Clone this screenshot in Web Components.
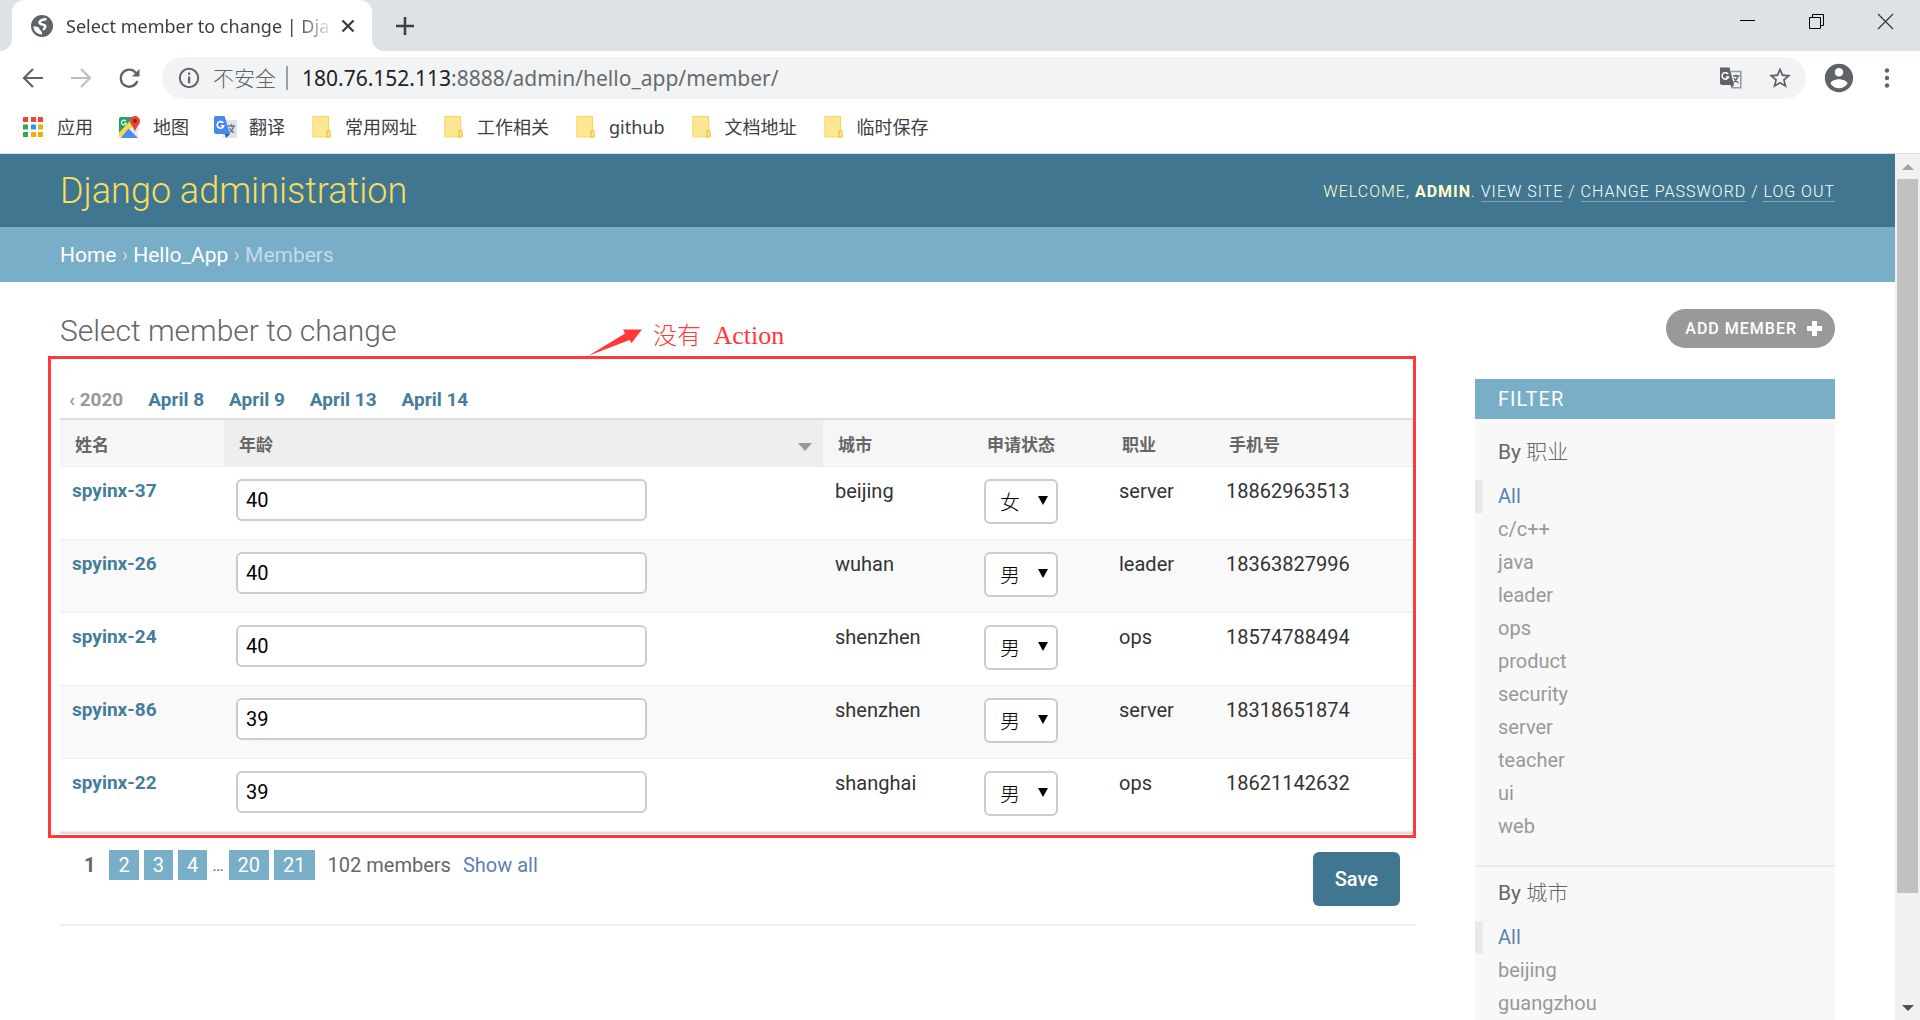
<!DOCTYPE html>
<html lang="zh-CN">
<head>
<meta charset="utf-8">
<title>Select member to change | Django site admin</title>
<style>
  html, body { margin: 0; height: 100%; }
  body { font-family: Roboto, "Noto Sans CJK SC", sans-serif; font-size: 20px; line-height: 24px; color: #333; background: #fff; overflow: hidden; }
</style>
</head>
<body>
<browser-window></browser-window>

<script>
class BaseElement extends HTMLElement {
  constructor() {
    super();
    this.attachShadow({ mode: 'open' });
  }
  connectedCallback() {
    this.shadowRoot.innerHTML = '<style>*{box-sizing:border-box}a{color:inherit;text-decoration:none}button{font:inherit;border:0;background:none;padding:0;color:inherit}svg{display:block;flex:none}' + this.styles() + '</style>' + this.markup();
  }
  styles() { return ''; }
  markup() { return '<slot></slot>'; }
}

const UI_FONT = '"Noto Sans","Noto Sans CJK SC",sans-serif';

class TabStrip extends BaseElement {
  styles() { return `
    :host{display:flex;height:51px;background:#dee1e6;padding-left:12px;font-family:${UI_FONT};color:#3c4043}
    .tab{position:relative;display:flex;align-items:center;width:360px;padding:0 16px 0 18px;background:#fff;border-radius:12px 12px 0 0;font-size:18px}
    .tab::before,.tab::after{content:"";position:absolute;bottom:0;width:12px;height:12px}
    .tab::before{right:100%;background:radial-gradient(circle at 0 0,transparent 12px,#fff 12px)}
    .tab::after{left:100%;background:radial-gradient(circle at 100% 0,transparent 12px,#fff 12px)}
    .title{flex:1;margin:0 6px 0 12px;overflow:hidden;white-space:nowrap;-webkit-mask-image:linear-gradient(90deg,#000 86%,transparent);mask-image:linear-gradient(90deg,#000 86%,transparent)}
    .new{display:grid;place-items:center;margin-left:21px;width:24px}
    .win{display:flex;margin-left:auto}
    .win button{display:grid;justify-items:center;align-content:start;padding-top:13px;width:69px;color:#000}`; }
  markup() { return `
    <div class="tab">
      <svg width="24" height="24" viewBox="0 0 24 24"><circle cx="12" cy="12" r="11" fill="#5f6368"/><path d="M16.500 5.200C12 5.200 9 7 9.800 9.200c.8 1.800 4.700.8 5.400 2.800.5 1.500-1.700 2.300-1.200 4.200" fill="none" stroke="#fff" stroke-width="2.600"/><path d="M3.400 12.300C6 12.300 9 13 9.500 14.800c.5 1.900 3 1.900 2.500 5.600C7 20.400 3.400 17 3.400 12.300z" fill="#fff"/></svg>
      <span class="title">Select member to change | Dja</span>
      <button aria-label="Close tab"><svg width="16" height="16" viewBox="0 0 16 16"><path d="M2.500 2.500l11 11M13.500 2.500l-11 11" stroke="#3c4043" stroke-width="2.400"/></svg></button>
    </div>
    <button class="new" aria-label="New tab"><svg width="18" height="18" viewBox="0 0 18 18"><path d="M9 0v18M0 9h18" stroke="#3c4043" stroke-width="2.600"/></svg></button>
    <div class="win">
      <button aria-label="Minimize"><svg width="17" height="17" viewBox="0 0 17 17"><path d="M1 7.500h15" stroke="#000"/></svg></button>
      <button aria-label="Restore"><svg width="17" height="17" viewBox="0 0 17 17" fill="none" stroke="#000"><path d="M1.500 4.500h11v11h-11zM4.500 4.500v-3h11v11h-3"/></svg></button>
      <button aria-label="Close"><svg width="17" height="17" viewBox="0 0 17 17"><path d="M1 1l15 15M16 1L1 16" stroke="#333" stroke-width="1.200"/></svg></button>
    </div>`; }
}

class AddressBar extends BaseElement {
  styles() { return `
    :host{display:flex;align-items:center;height:54px;padding:0 21px;font-family:${UI_FONT};font-size:21px;color:#5f6368}
    button{display:grid;place-items:center;width:24px;margin-right:24px}
    .pill{flex:1;display:flex;align-items:center;height:42px;margin:0 16px 0 -3px;padding:0 15px;border-radius:21px;background:#f1f3f4}
    .pill button:last-child{margin-right:0}
    .warn{padding:0 10px 0 12px;font-weight:300}
    .bar{width:2px;height:24px;background:#9aa0a6;margin-right:14px}
    .url{flex:1;color:#686b6e}
    .url b{font-weight:400;color:#202124}
    .avatar{width:34px;margin-right:19px}
    .menu{margin-right:0}`; }
  markup() { return `
    <button aria-label="Back"><svg width="24" height="24" viewBox="0 0 24 24" fill="none" stroke="#5f6368" stroke-width="2.200"><path d="M22 12H3.500M12 3l-9 9 9 9"/></svg></button>
    <button aria-label="Forward"><svg width="24" height="24" viewBox="0 0 24 24" fill="none" stroke="#bcbec1" stroke-width="2.200"><path d="M2 12h18.500M12 3l9 9-9 9"/></svg></button>
    <button aria-label="Reload"><svg width="24" height="24" viewBox="0 0 24 24"><path d="M19 7A8.500 8.500 0 1 0 20.300 15" fill="none" stroke="#5f6368" stroke-width="2.300"/><path d="M22.500 3v7.500H15z" fill="#5f6368"/></svg></button>
    <div class="pill">
      <svg width="24" height="24" viewBox="0 0 24 24"><circle cx="12" cy="12" r="9.200" fill="none" stroke="#5f6368" stroke-width="2"/><path d="M11 6.500h2.200v2.300H11zM11 10.600h2.200v6.600H11z" fill="#5f6368"/></svg>
      <span class="warn">不安全</span><span class="bar"></span>
      <span class="url"><b>180.76.152.113</b>:8888/admin/hello_app/member/</span>
      <button aria-label="Translate"><svg width="24" height="24" viewBox="0 0 24 24"><path d="M12 5.500h9.800v16.200H12.500" fill="none" stroke="#9a9da0" stroke-width="1.600"/><path d="M1 1.500h9.500L15 19H2.500L1 17.500z" fill="#5f6368"/><path d="M11.500 19H15l-2.500 3z" fill="#5f6368"/><path d="M9.200 8.200A3.300 3.300 0 1 0 9.500 11H6.800" fill="none" stroke="#fff" stroke-width="1.500"/><path d="M14 10h6.500M17 8.500V10M19 10c-.7 3-2.500 5-4.500 6.500M15 12c1 2 2.500 3.500 4.500 5" fill="none" stroke="#5f6368" stroke-width="1.300"/></svg></button>
      <button aria-label="Bookmark"><svg width="26" height="26" viewBox="0 0 24 24"><path fill="#5f6368" d="M22 9.240l-7.190-.620L12 2 9.190 8.630 2 9.240l5.460 4.730L5.820 21 12 17.270 18.180 21l-1.630-7.030L22 9.240zM12 15.400l-3.760 2.270 1-4.280-3.320-2.880 4.380-.380L12 6.100l1.710 4.040 4.380.380-3.320 2.880 1 4.280L12 15.400z"/></svg></button>
    </div>
    <button class="avatar" aria-label="Profile"><svg width="34" height="34" viewBox="0 0 24 24"><path fill="#5f6368" d="M12 2C6.480 2 2 6.480 2 12s4.480 10 10 10 10-4.480 10-10S17.520 2 12 2zm0 3c1.660 0 3 1.340 3 3s-1.340 3-3 3-3-1.340-3-3 1.340-3 3-3zm0 14.200c-2.500 0-4.710-1.280-6-3.220.030-1.990 4-3.080 6-3.080 1.990 0 5.970 1.090 6 3.080-1.290 1.940-3.500 3.220-6 3.220z"/></svg></button>
    <button class="menu" aria-label="Menu"><svg width="24" height="24" viewBox="0 0 24 24" fill="#5f6368"><circle cx="12" cy="4.500" r="2.200"/><circle cx="12" cy="12" r="2.200"/><circle cx="12" cy="19.500" r="2.200"/></svg></button>`; }
}

const BOOKMARK_ICONS = {
  apps: '<path fill="#f44336" d="M2 2h5v5H2zM10 2h5v5h-5zM17 2h5v5h-5z"/><path fill="#34a853" d="M2 9.500h5v5H2zM2 17h5v5H2z"/><path fill="#2196f3" d="M10 9.500h5v5h-5z"/><path fill="#fbab00" d="M17 9.500h5v5h-5zM10 17h5v5h-5zM17 17h5v5h-5z"/>',
  maps: '<rect x="2" y="2" width="19" height="21" rx="2" fill="#e8eaed"/><path d="M4 2h13L2 18V4a2 2 0 0 1 2-2z" fill="#22a45d"/><path d="M2 18L17 2l4 4L4 23a2 2 0 0 1-2-2z" fill="#fdd74b"/><path d="M11.500 13.500L21 23H4z" fill="#4a8cf7"/><path d="M8.800 6A2.400 2.400 0 1 0 9.300 8H7.200" fill="none" stroke="#fff" stroke-width="1.200"/><path d="M18 1a5 5 0 0 1 5 5c0 4-3.800 5.500-5 11-1.200-5.500-5-7-5-11a5 5 0 0 1 5-5z" fill="#e8453c"/><circle cx="18" cy="6" r="1.900" fill="#8c1d18"/>',
  translate: '<rect x="10" y="5" width="14" height="18" rx="1.500" fill="#dfe2e6"/><path d="M15 11h7M18.500 9v2M21 11c-.6 3-2.500 5-4.500 6.500M16.500 13c1 2 2.500 3.500 4.500 5" fill="none" stroke="#607d8b" stroke-width="1.400"/><path d="M2 1h9.500L17 19H3a2 2 0 0 1-2-2V2.500z" fill="#4688f1"/><path d="M12 19h5l-4 4z" fill="#2f55b5"/><path d="M10.200 8A3.300 3.300 0 1 0 10.700 10.700H8" fill="none" stroke="#fff" stroke-width="1.600"/>',
  folder: '<path d="M4 1.500h15.500V22H4z" fill="#ffe694" stroke="#f7d75c" stroke-width="1.200"/><path d="M18 22v-5.500q0-1 1-1h1q1 0 1 1V22z" fill="#ffe694" stroke="#ebc22f" stroke-width="1.200"/>'
};

class BookmarkItem extends BaseElement {
  styles() { return `
    :host{display:block}
    a{display:flex;align-items:center;gap:12px}`; }
  markup() { return `<a href="#"><svg width="24" height="24" viewBox="0 0 24 24">${BOOKMARK_ICONS[this.getAttribute('icon')]}</svg><slot></slot></a>`; }
}

class BookmarkBar extends BaseElement {
  styles() { return `:host{display:flex;align-items:center;gap:24px;height:49px;padding:0 21px 5px;border-bottom:1px solid #dcdee1;font-family:${UI_FONT};font-size:18px;color:#3c4043}`; }
  markup() { return `
    <bookmark-item icon="apps">应用</bookmark-item>
    <bookmark-item icon="maps">地图</bookmark-item>
    <bookmark-item icon="translate">翻译</bookmark-item>
    <bookmark-item icon="folder">常用网址</bookmark-item>
    <bookmark-item icon="folder">工作相关</bookmark-item>
    <bookmark-item icon="folder">github</bookmark-item>
    <bookmark-item icon="folder">文档地址</bookmark-item>
    <bookmark-item icon="folder">临时保存</bookmark-item>`; }
}

class AdminHeader extends BaseElement {
  styles() { return `
    :host{display:flex;align-items:center;justify-content:space-between;height:73px;padding:0 60px;background:#417690;color:#ffc}
    h1{margin:0;font-size:36px;font-weight:300;color:#f5dd5d}
    .tools{padding-top:2px;font-size:16px;letter-spacing:1px;font-weight:300;text-transform:uppercase}
    .tools b{font-weight:700}
    .tools a{color:#fff;border-bottom:1px solid rgba(255,255,255,.35)}`; }
  markup() { return `
    <h1><a href="#">Django administration</a></h1>
    <div class="tools">Welcome, <b>admin</b>. <a href="#">View site</a> / <a href="#">Change password</a> / <a href="#">Log out</a></div>`; }
}

class AdminBreadcrumbs extends BaseElement {
  styles() { return `
    :host{display:block;padding:2px 60px 0;line-height:53px;font-size:21px;background:#79aec8;color:#c4dce8}
    a{color:#fff}`; }
  markup() { return `<nav aria-label="Breadcrumbs"><a href="#">Home</a> › <a href="#">Hello_App</a> › Members</nav>`; }
}

const MEMBERS = [
  ['spyinx-37', 40, 'beijing', '女', 'server', '18862963513'],
  ['spyinx-26', 40, 'wuhan', '男', 'leader', '18363827996'],
  ['spyinx-24', 40, 'shenzhen', '男', 'ops', '18574788494'],
  ['spyinx-86', 39, 'shenzhen', '男', 'server', '18318651874'],
  ['spyinx-22', 39, 'shanghai', '男', 'ops', '18621142632']
];

class ChoiceSelect extends BaseElement {
  styles() { return `
    :host{display:inline-grid;vertical-align:top;align-items:center}
    select,svg{grid-area:1/1}
    select{appearance:none;width:74px;height:45px;padding:4px 0 0 14px;border:2px solid #ccc;border-radius:6px;background:#fff;color:#000;font:inherit;font-weight:300}
    svg{justify-self:end;margin:0 10px 2px 0;pointer-events:none}`; }
  markup() {
    const v = this.getAttribute('value');
    return `<select aria-label="${this.getAttribute('label')}">${['男', '女'].map(o => `<option${o === v ? ' selected' : ''}>${o}</option>`).join('')}</select><svg width="10" height="9" viewBox="0 0 10 9"><path d="M0 0h10L5 9z" fill="#000"/></svg>`;
  }
}

class MemberTable extends BaseElement {
  styles() { return `
    :host{display:block;border:solid #ddd;border-width:2px 0}
    table{width:100%;border-collapse:collapse;table-layout:fixed}
    th,td{text-align:left;vertical-align:top;border-bottom:1px solid #eee}
    thead th{height:46px;padding:4px 15px 0;vertical-align:middle;background:#f6f6f6;color:#666;font-size:17px}
    thead th.sorted{background:#eee}
    .sorted a{display:flex;align-items:center;justify-content:space-between;margin-right:-4px}
    .sorted svg{margin-top:4px}
    tbody th,td{height:73px;padding:12px 12px 0}
    tbody tr:nth-child(even){background:#f9f9f9}
    tbody th{color:#447e9b;font-size:19px;font-weight:700}
    input{display:block;width:411px;max-width:100%;height:42px;padding:0 8px;border:2px solid #ccc;border-radius:6px;font:inherit;color:#000;background:#fff}`; }
  markup() { return `
    <table>
      <colgroup><col style="width:164px"><col><col style="width:149px"><col style="width:135px"><col style="width:107px"><col style="width:201px"></colgroup>
      <thead><tr>
        <th scope="col"><a href="#">姓名</a></th>
        <th scope="col" class="sorted"><a href="#">年龄<svg width="14" height="8" viewBox="0 0 14 8"><path d="M0 0h14L7 8z" fill="#999"/></svg></a></th>
        <th scope="col"><a href="#">城市</a></th><th scope="col"><a href="#">申请状态</a></th><th scope="col"><a href="#">职业</a></th><th scope="col"><a href="#">手机号</a></th>
      </tr></thead>
      <tbody>${MEMBERS.map(([name, age, city, sex, job, phone]) => `<tr>
        <th scope="row"><a href="#">${name}</a></th>
        <td><input type="text" value="${age}" aria-label="${name} 年龄"></td>
        <td>${city}</td><td><choice-select value="${sex}" label="${name} 申请状态"></choice-select></td><td>${job}</td><td>${phone}</td></tr>`).join('')}
      </tbody>
    </table>`; }
}

class DateHierarchy extends BaseElement {
  styles() { return `
    :host{display:block}
    nav{display:flex;gap:25px;padding:2px 0 0 9px;line-height:37px;font-size:19px;font-weight:700;color:#447e9b}
    .back{color:#999}`; }
  markup() { return `<nav aria-label="Dates"><a class="back" href="#">‹ 2020</a><a href="#">April 8</a><a href="#">April 9</a><a href="#">April 13</a><a href="#">April 14</a></nav>`; }
}

class ListPaginator extends BaseElement {
  styles() { return `
    :host{display:flex;align-items:flex-start;justify-content:space-between;padding:16px 15px 18px 0;border-bottom:2px solid #eee;color:#666}
    .pages{display:flex;gap:5px;line-height:30px}
    .pages a{padding:0 9px;background:#79aec8;color:#fff}
    .this{padding:0 9px 0 24px}
    .gap{font-size:17px}
    .count{padding:0 7px 0 8px}
    .pages .all{background:none;color:#5b80b2;padding:0}
    button{margin-top:2px;height:54px;padding:0 22px;border-radius:6px;background:#417690;color:#fff;font-weight:500}`; }
  markup() { return `
    <div class="pages"><b class="this">1</b><a href="#">2</a><a href="#">3</a><a href="#">4</a><span class="gap">…</span><a href="#">20</a><a href="#">21</a><span class="count">102 members</span><a class="all" href="#">Show all</a></div>
    <button type="submit">Save</button>`; }
}

class FilterGroup extends BaseElement {
  styles() { return `
    :host{display:block;padding:14px 0 22px;border-bottom:2px solid #eaeaea}
    h3{margin:0;padding:0 23px 16px;font-size:21px;font-weight:400;color:#666}
    h3 span{font-weight:300}
    ul{margin:0;padding:0;list-style:none;color:#999}
    li{padding-left:23px;line-height:33px}
    li:first-child{padding-left:15px;border-left:8px solid #eaeaea;color:#5b80b2}`; }
  markup() { return `<h3>By <span>${this.getAttribute('name')}</span></h3><ul>${this.getAttribute('choices').split(' ').map(c => `<li><a href="#">${c}</a></li>`).join('')}</ul>`; }
}

class FilterPanel extends BaseElement {
  styles() { return `
    :host{display:block;flex:none;width:360px;background:#f8f8f8}
    h2{margin:0 0 7px;padding-left:23px;line-height:40px;font-size:20px;font-weight:400;letter-spacing:1px;background:#79aec8;color:#fff;text-transform:uppercase}`; }
  markup() { return `<h2>Filter</h2>
    <filter-group name="职业" choices="All c/c++ java leader ops product security server teacher ui web"></filter-group>
    <filter-group name="城市" choices="All beijing guangzhou"></filter-group>`; }
}

class CalloutNote extends BaseElement {
  styles() { return `
    :host{position:absolute;inset:-23px -1px -4px -12px;border:3px solid #ff3838;pointer-events:none;color:#ff3838}
    .note{position:absolute;left:537px;bottom:100%;display:flex;align-items:center;gap:11px;margin-bottom:1px}
    p{margin:0;padding-bottom:10px;font:26px/24px "Liberation Serif","Noto Sans CJK SC",serif;white-space:nowrap}
    span{margin-right:6px;font-size:24px;font-weight:300}`; }
  markup() { return `<div class="note"><svg width="54" height="30" viewBox="0 0 54 30"><path d="M0 30L37 7.500 35 3.500 54 3.500 43.500 17 41.500 14z" fill="#ff3838"/></svg><p><span>没有</span> Action</p></div>`; }
}

class ChangeList extends BaseElement {
  styles() { return `
    :host{display:block;padding:26px 60px 0}
    .head{display:flex;align-items:center;justify-content:space-between;height:40px;margin-bottom:31px}
    h1{margin:0;padding-top:5px;font-size:30px;font-weight:300;color:#666;line-height:40px}
    .add{display:flex;align-items:center;gap:10px;height:39px;padding:1px 13px 0 19px;border-radius:20px;background:#999;color:#fff;font-size:16px;font-weight:500;letter-spacing:1px;text-transform:uppercase}
    .cols{display:flex;align-items:flex-start;gap:60px}
    form{flex:1;min-width:0}
    .list{position:relative}`; }
  markup() { return `
    <div class="head"><h1>Select member to change</h1><a class="add" href="#">Add member<svg width="15" height="15" viewBox="0 0 15 15"><path d="M7.500 0v15M0 7.500h15" stroke="#fff" stroke-width="5"/></svg></a></div>
    <div class="cols">
      <form><div class="list"><date-hierarchy></date-hierarchy><member-table></member-table><callout-note></callout-note></div><list-paginator></list-paginator></form>
      <filter-panel></filter-panel>
    </div>`; }
}

class PageScrollbar extends BaseElement {
  styles() { return `
    :host{display:flex;flex-direction:column;align-items:center;flex:none;width:25px;padding:10px 0 9px;background:#f1f1f1}
    .track{flex:1;width:21px;margin:9px 0 15px}
    .thumb{height:88%;background:#c1c1c1}`; }
  markup() { return `<svg width="12" height="6" viewBox="0 0 12 6"><path d="M0 6h12L6 0z" fill="#a3a3a3"/></svg><div class="track"><div class="thumb"></div></div><svg width="12" height="6" viewBox="0 0 12 6"><path d="M0 0h12L6 6z" fill="#505050"/></svg>`; }
}

class BrowserWindow extends BaseElement {
  styles() { return `
    :host{display:flex;flex-direction:column;height:100vh}
    .view{flex:1;min-height:0;display:flex}
    main{flex:1;min-width:0;overflow:hidden}`; }
  markup() { return `
    <tab-strip></tab-strip><address-bar></address-bar><bookmark-bar></bookmark-bar>
    <div class="view"><main><admin-header></admin-header><admin-breadcrumbs></admin-breadcrumbs><change-list></change-list></main><page-scrollbar></page-scrollbar></div>`; }
}

customElements.define('tab-strip', TabStrip);
customElements.define('address-bar', AddressBar);
customElements.define('bookmark-item', BookmarkItem);
customElements.define('bookmark-bar', BookmarkBar);
customElements.define('admin-header', AdminHeader);
customElements.define('admin-breadcrumbs', AdminBreadcrumbs);
customElements.define('choice-select', ChoiceSelect);
customElements.define('member-table', MemberTable);
customElements.define('date-hierarchy', DateHierarchy);
customElements.define('list-paginator', ListPaginator);
customElements.define('filter-group', FilterGroup);
customElements.define('filter-panel', FilterPanel);
customElements.define('callout-note', CalloutNote);
customElements.define('change-list', ChangeList);
customElements.define('page-scrollbar', PageScrollbar);
customElements.define('browser-window', BrowserWindow);
</script>
</body>
</html>
